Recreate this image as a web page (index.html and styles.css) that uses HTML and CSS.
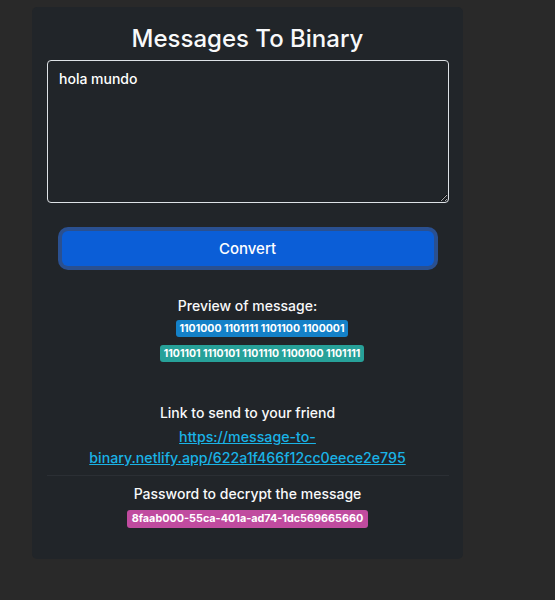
FILE: index.html
```html
<!DOCTYPE html>
<html lang="en">
<head>
<meta charset="utf-8">
<title>Messages To Binary</title>
<link rel="stylesheet" href="styles.css">
</head>
<body>
<main class="card">
  <h1 class="title">Messages To Binary</h1>
  <textarea class="message">hola mundo</textarea>
  <button class="convert" type="button">Convert</button>
  <section class="preview">
    <p class="label">Preview of message:</p>
    <ul class="badges">
      <li><span class="badge badge-blue">1101000 1101111 1101100 1100001</span></li>
      <li><span class="badge badge-teal">1101101 1110101 1101110 1100100 1101111</span></li>
    </ul>
  </section>
  <section class="share">
    <p class="label">Link to send to your friend</p>
    <a class="link" href="#">https://message-to-binary.netlify.app/622a1f466f12cc0eece2e795</a>
  </section>
  <hr class="divider">
  <section class="password">
    <p class="label">Password to decrypt the message</p>
    <span class="badge badge-pink">8faab000-55ca-401a-ad74-1dc569665660</span>
  </section>
</main>
</body>
</html>
```
FILE: styles.css
```css
* { box-sizing: border-box; }
html, body { height: 100%; }
body {
  margin: 0;
  padding: 7px 0 0 32px;
  background: #292929;
  font-family: Inter, "Noto Sans", sans-serif;
  color: #f8f9fa;
}
.card {
  width: 431px;
  height: 552px;
  background: #212529;
  border-radius: 5px;
  padding: 14px 15px 0;
  display: flex;
  flex-direction: column;
  align-items: center;
}
.title {
  margin: 0 0 3px;
  font-size: 24px;
  font-weight: 500;
  line-height: 36px;
}
.message {
  margin-top: 0;
  width: 402px;
  height: 143px;
  align-self: flex-start;
  background: #212529;
  border: 1px solid #dee2e6;
  border-radius: 4px;
  color: #fff;
  font-family: inherit;
  font-size: 14px;
  font-weight: 500;
  padding: 9px 11px;
  resize: vertical;
}
.convert {
  margin-top: 28px;
  width: 372px;
  height: 35px;
  background: #0b5ed7;
  border: 0;
  border-radius: 6px;
  box-shadow: 0 0 0 4px #2a5090;
  color: #fff;
  font-family: inherit;
  font-size: 15px;
  font-weight: 500;
}
.preview {
  margin-top: 29px;
  display: flex;
  flex-direction: column;
  align-items: center;
}
.badges {
  list-style: none;
  margin: 3px 0 0;
  padding: 0 0 0 29px;
  display: flex;
  flex-direction: column;
  align-items: center;
  gap: 8px;
}
.badges li { display: flex; }
.label {
  margin: 0;
  font-size: 14px;
  font-weight: 500;
  line-height: 22px;
  color: #f8f9fa;
}
.badge {
  display: inline-block;
  font-size: 10.5px;
  font-weight: 700;
  line-height: 17px;
  padding: 0 4px;
  border-radius: 3px;
  color: #fff;
}
.badge-blue { background: #1481c8; }
.badge-teal { background: #27a199; }
.badge-pink {
  background: #c04b9f;
  margin-top: 5px;
  font-size: 10.8px;
  line-height: 18px;
  padding: 0 5px;
}
.share {
  margin-top: 40px;
  text-align: center;
  width: 330px;
}
.link {
  display: block;
  color: #1ab3e6;
  font-size: 14.2px;
  font-weight: 500;
  line-height: 21px;
  margin-top: 2px;
}
.divider {
  width: 402px;
  margin: 7px 0 0;
  border: 0;
  border-top: 1px solid #2b2f34;
}
.password {
  margin-top: 7px;
  display: flex;
  flex-direction: column;
  align-items: center;
}
```
